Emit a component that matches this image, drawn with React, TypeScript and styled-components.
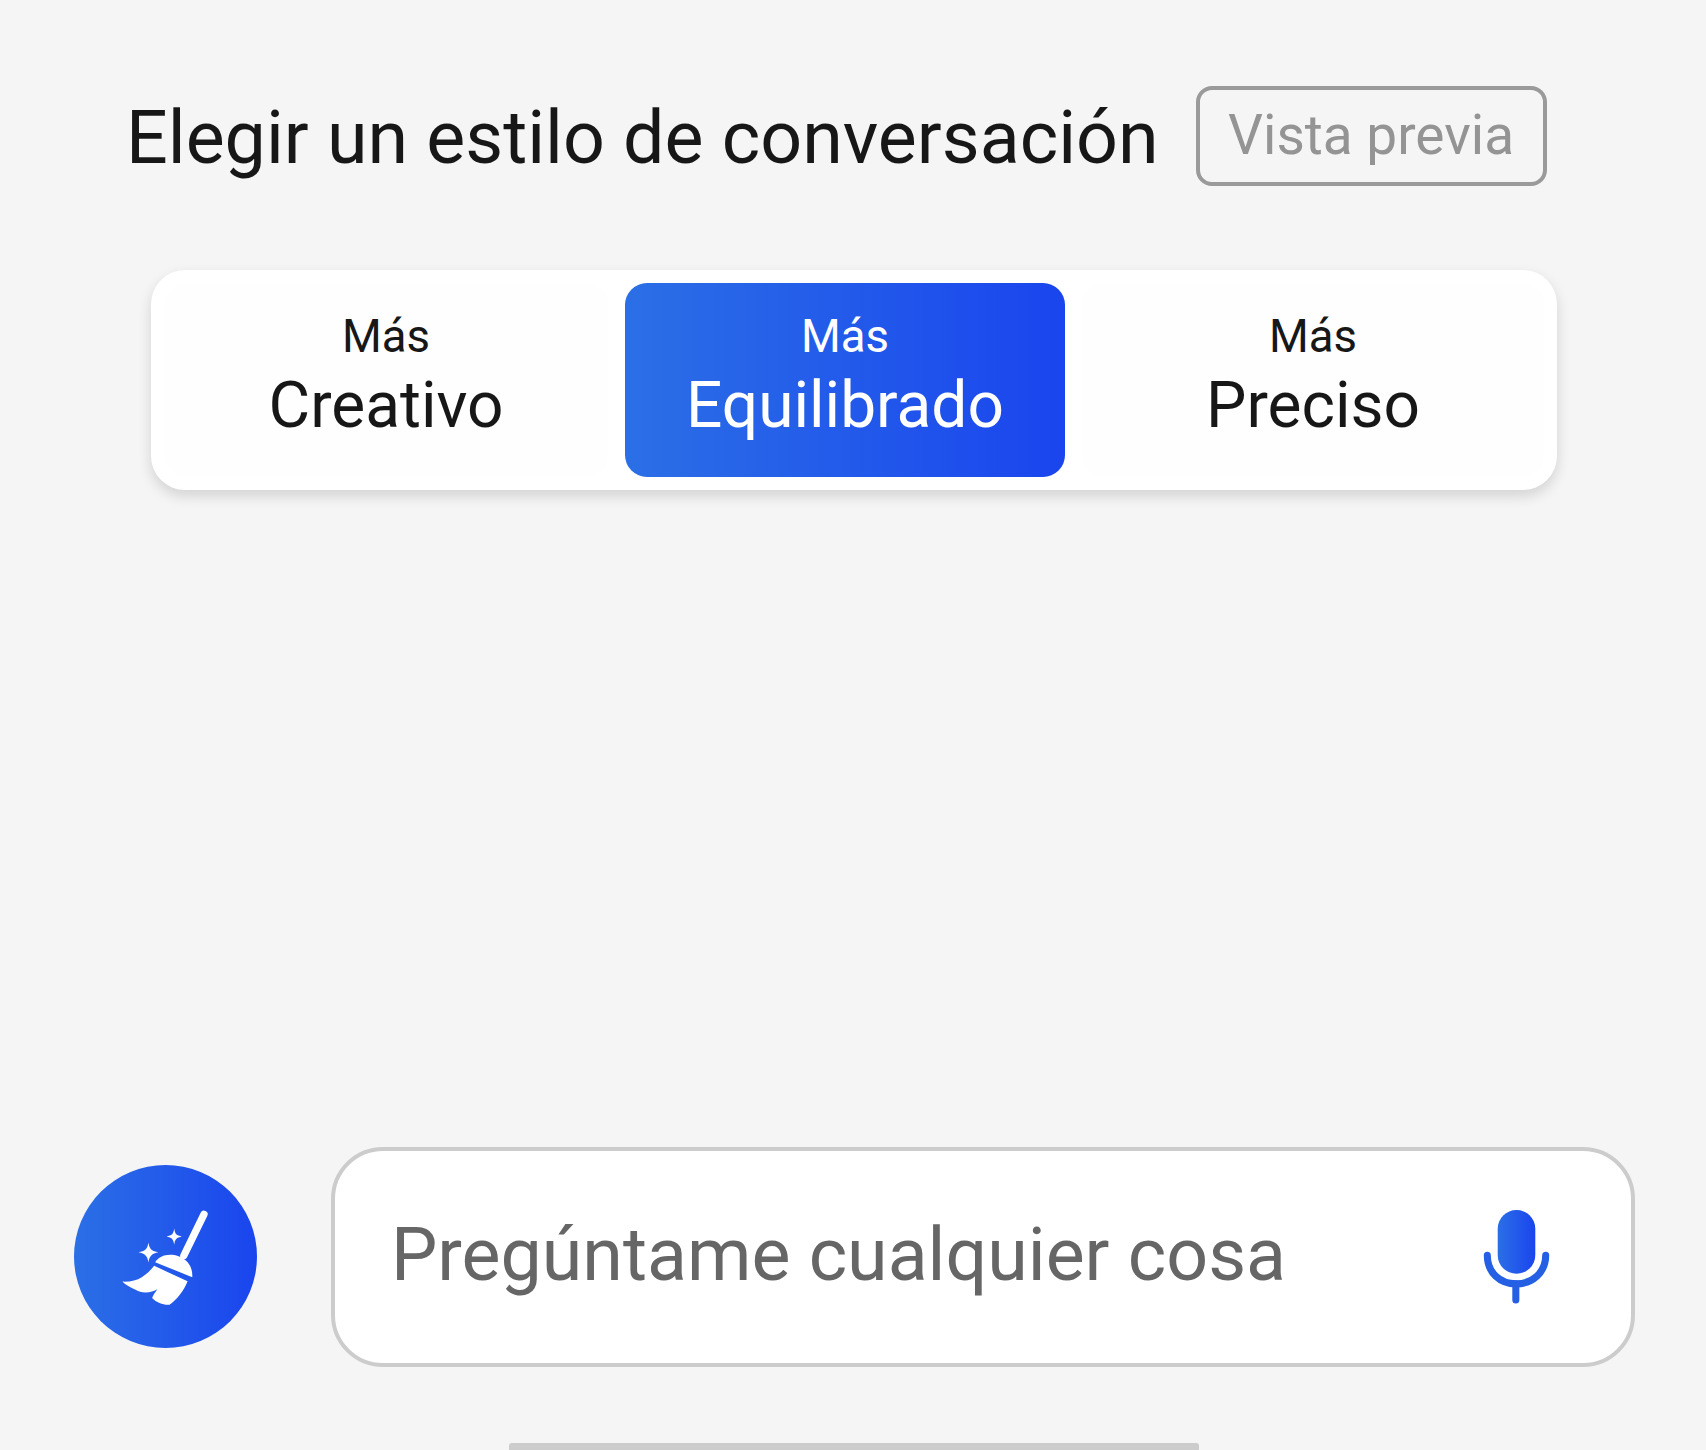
import React from 'react';
import styled, { createGlobalStyle } from 'styled-components';

const GlobalStyle = createGlobalStyle`
    html, body {
        margin: 0;
        padding: 0;
        background: #f5f5f5;
    }
`

const Page = styled.div`
    width: 1706px;
    height: 1450px;
    overflow: hidden;
    display: flex;
    flex-direction: column;
    background: #f5f5f5;
    font-family: Roboto, "Liberation Sans", sans-serif;
    color: #171717;
`

const Header = styled.div`
    display: flex;
    align-items: flex-start;
    gap: 37px;
    padding: 86px 0 0 126px;
`

const Title = styled.h1`
    margin: 0;
    font-size: 73.5px;
    font-weight: 400;
    line-height: 104px;
    white-space: nowrap;
`

const PreviewBadge = styled.div`
    box-sizing: border-box;
    width: 351px;
    height: 100px;
    padding-bottom: 2px;
    display: flex;
    align-items: center;
    justify-content: center;
    border: 4px solid #9a9a9a;
    border-radius: 16px;
    color: #949494;
    font-size: 55px;
`

const Selector = styled.div`
    box-sizing: border-box;
    width: 1406px;
    height: 220px;
    margin: 80px 0 0 151px;
    padding: 13px;
    display: grid;
    grid-template-columns: 444px 440px 462px;
    column-gap: 17px;
    background: #ffffff;
    border-radius: 34px;
    box-shadow: 0 6px 14px rgba(0, 0, 0, 0.14);
`

const Tab = styled.div<{ $active?: boolean }>`
    display: flex;
    flex-direction: column;
    align-items: center;
    padding-top: 24px;
    border-radius: 22px;
    background: ${({ $active }) => $active ? 'linear-gradient(90deg, #2b6fe6, #1a45ee)' : '#fefefe'};
    color: ${({ $active }) => $active ? '#ffffff' : '#171717'};
`

const TabHint = styled.span`
    font-size: 45.5px;
    line-height: 60px;
`

const TabName = styled.span`
    font-size: 64px;
    line-height: 78px;
`

const Composer = styled.div`
    display: flex;
    align-items: center;
    margin: auto 0 0 74px;
    gap: 74px;
`

const SweepButton = styled.div`
    width: 183px;
    height: 183px;
    margin-bottom: 1px;
    flex: none;
    display: flex;
    align-items: center;
    justify-content: center;
    border-radius: 50%;
    background: linear-gradient(90deg, #2b6fe6, #1a45ee);
`

const InputBox = styled.div`
    box-sizing: border-box;
    width: 1304px;
    height: 220px;
    display: flex;
    align-items: center;
    justify-content: space-between;
    padding: 0 81px 0 56px;
    background: #ffffff;
    border: 4px solid #cccccc;
    border-radius: 52px;
`

const Placeholder = styled.span`
    padding-bottom: 5px;
    font-size: 73.5px;
    color: #666666;
`

const HomeBar = styled.div`
    width: 690px;
    height: 7px;
    margin: 76px 0 0 509px;
    background: #cccccc;
    border-radius: 3px 3px 0 0;
`

const BroomIcon = () => (
    <svg width="87" height="97" viewBox="246 261 260 290" fill="#ffffff">
        <path d="M491 280 L431 403" stroke="#ffffff" strokeWidth="22" strokeLinecap="round" />
        <path d="M345 423 C358 403 385 395 415 405 C440 414 458 435 456 468 Z" />
        <path d="M342 434 L442 480 C430 510 410 535 388 550 C372 552 350 545 336 530 C340 520 346 512 352 504 C335 515 305 518 285 505 C270 498 255 490 247 481 C270 482 290 478 305 468 C320 458 332 447 342 434 Z" />
        <path d="M325 364 C328 384 335 390 355 393 C335 397 328 404 325 424 C322 404 315 397 295 393 C315 390 322 384 325 364 Z" />
        <path d="M402 322 C404 338 409 343 425 346 C409 349 404 354 402 371 C400 354 395 349 379 346 C395 343 400 338 402 322 Z" />
    </svg>
)

const MicIcon = () => (
    <svg width="67" height="94" viewBox="250 243 198 280">
        <defs>
            <linearGradient id="micFill" x1="0" x2="1" y1="0" y2="0">
                <stop offset="0" stopColor="#2b6fe6" />
                <stop offset="1" stopColor="#1a45ee" />
            </linearGradient>
        </defs>
        <rect x="293" y="243" width="112" height="190" rx="56" fill="url(#micFill)" />
        <path d="M262 378 C262 430 300 463 348 463 C396 463 436 430 436 378" fill="none" stroke="#2560e4" strokeWidth="21" strokeLinecap="round" />
        <path d="M347 463 L347 511" fill="none" stroke="#2560e4" strokeWidth="21" strokeLinecap="round" />
    </svg>
)

const App = () => {
    return <Page>
        <GlobalStyle />
        <Header>
            <Title>Elegir un estilo de conversación</Title>
            <PreviewBadge>Vista previa</PreviewBadge>
        </Header>
        <Selector>
            <Tab>
                <TabHint>Más</TabHint>
                <TabName>Creativo</TabName>
            </Tab>
            <Tab $active>
                <TabHint>Más</TabHint>
                <TabName>Equilibrado</TabName>
            </Tab>
            <Tab>
                <TabHint>Más</TabHint>
                <TabName>Preciso</TabName>
            </Tab>
        </Selector>
        <Composer>
            <SweepButton><BroomIcon /></SweepButton>
            <InputBox>
                <Placeholder>Pregúntame cualquier cosa</Placeholder>
                <MicIcon />
            </InputBox>
        </Composer>
        <HomeBar />
    </Page>
}

export default App;
